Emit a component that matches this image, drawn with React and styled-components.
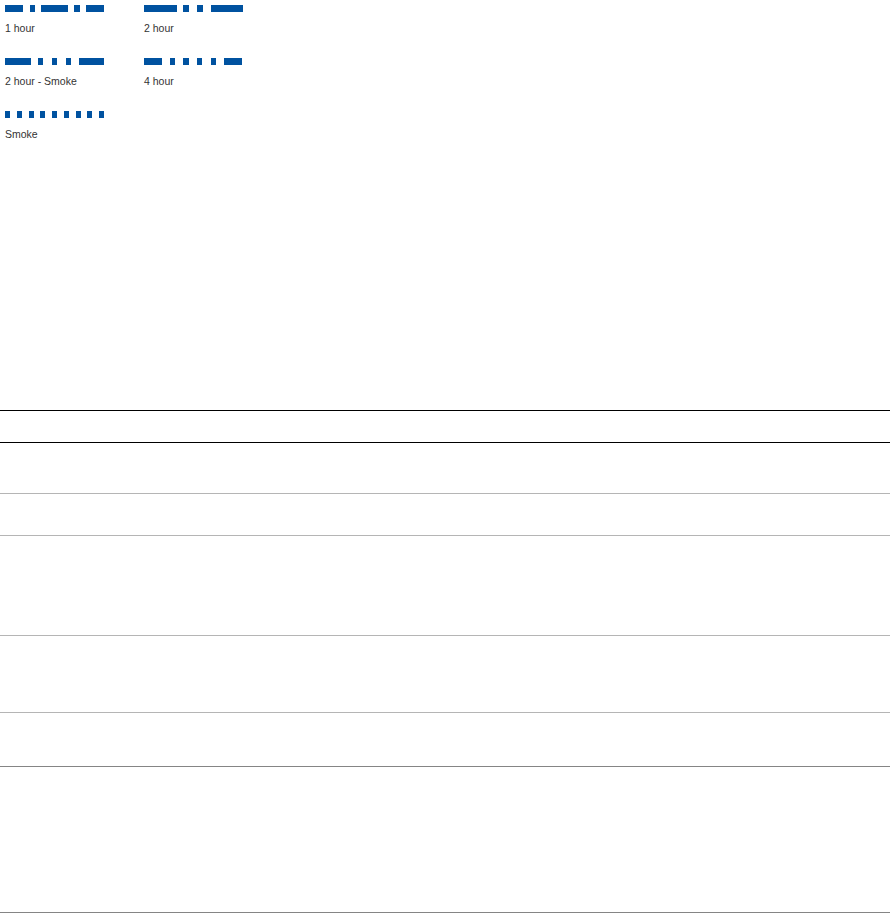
import React from "react";
import styled, { createGlobalStyle } from "styled-components";

const Global = createGlobalStyle`
  html, body { margin: 0; padding: 0; background: #fff; }
  body { font-family: "Liberation Sans", Arial, sans-serif; }
`;

const Page = styled.div`
  display: flex;
  flex-direction: column;
`;

const Legend = styled.div`
  display: grid;
  grid-template-columns: 139px 139px;
  row-gap: 24px;
  padding: 5px 0 0 5px;
`;

const Item = styled.div`
  display: flex;
  flex-direction: column;
  gap: 10px;
`;

const Swatch = styled.svg`
  display: block;
  width: 99px;
  height: 7px;
`;

const Label = styled.span`
  font-size: 10.5px;
  line-height: 12px;
  color: #333;
  white-space: nowrap;
`;

const Table = styled.div`
  margin-top: 270px;
  width: 890px;
  display: flex;
  flex-direction: column;
`;

const Head = styled.div`
  box-sizing: border-box;
  height: 33px;
  border-top: 1px solid #000;
  border-bottom: 1px solid #000;
`;

const Row = styled.div`
  box-sizing: border-box;
  height: ${(p) => p.$h}px;
  border-bottom: 1px solid ${(p) => (p.$dark ? "#858585" : "#b5b5b5")};
`;

const BLUE = "#0052a0";

const smoke = Array.from({ length: 9 }, (_, i) => [Math.round(i * 11.75), 5]);

const items = [
  { label: "1 hour", segs: [[0, 18], [25, 5], [36, 27], [69, 6], [81, 18]] },
  { label: "2 hour", segs: [[0, 33], [39, 6], [53, 6], [67, 32]] },
  { label: "2 hour - Smoke", segs: [[0, 26], [33, 5], [47, 5], [61, 5], [74, 25]] },
  { label: "4 hour", segs: [[0, 18], [26, 5], [39, 6], [53, 5], [67, 5], [80, 18]] },
  { label: "Smoke", segs: smoke },
];

const rows = [
  { h: 51 },
  { h: 42 },
  { h: 100 },
  { h: 77 },
  { h: 54, dark: true },
  { h: 146, dark: true },
];

export default function App() {
  return (
    <Page>
      <Global />
      <Legend>
        {items.map((it) => (
          <Item key={it.label}>
            <Swatch viewBox="0 0 99 7">
              {it.segs.map(([x, w], i) => (
                <rect key={i} x={x} y={0} width={w} height={7} fill={BLUE} />
              ))}
            </Swatch>
            <Label>{it.label}</Label>
          </Item>
        ))}
      </Legend>
      <Table>
        <Head />
        {rows.map((r, i) => (
          <Row key={i} $h={r.h} $dark={r.dark} />
        ))}
      </Table>
    </Page>
  );
}
